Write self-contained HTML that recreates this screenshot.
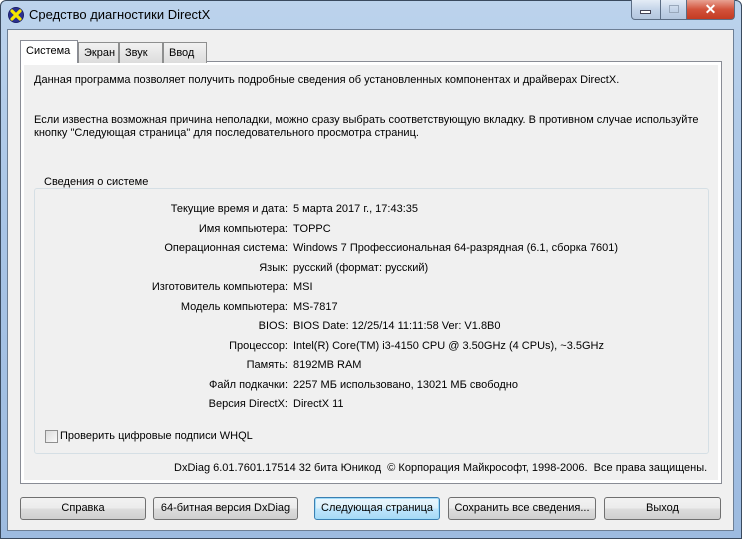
<!DOCTYPE html>
<html><head><meta charset="utf-8"><style>
*{margin:0;padding:0;box-sizing:border-box}
body{width:742px;height:539px;overflow:hidden;font-family:"Liberation Sans",sans-serif;font-size:11px;color:#000;background:#fff}
.frame{position:absolute;left:0;top:0;width:742px;height:539px;background:linear-gradient(#bcd3ec,#a9c5e6 40%,#9dbbe0);border:1px solid #3a4a5e;border-radius:6px 6px 0 0}
.client{position:absolute;left:7px;top:29px;width:727px;height:502px;background:#f0f0f0;border:1px solid #6d7f95}
.t{position:absolute;white-space:nowrap}
.title{left:29px;top:7px;font-size:13px;color:#000}
.cap{position:absolute;top:0;height:20px;border:1px solid #5b6d84;border-top:none}
.tab{position:absolute;top:41px;height:21px;border:1px solid #8e8f8f;border-bottom:none;background:linear-gradient(#f2f2f2,#dcdcdc);padding:4px 0 0 5px;font-size:11px}
.panel{position:absolute;left:12px;top:31px;width:702px;height:423px;border:1px solid #898c95;background:#fff}
.panel-in{position:absolute;left:3px;top:3px;right:3px;bottom:3px;background:#f0f0f0}
.grp{position:absolute;left:26px;top:158px;width:675px;height:266px;border:1px solid #d5dfe5;border-radius:3px}
.btn{position:absolute;top:467px;height:23px;border:1px solid #707070;border-radius:3px;background:linear-gradient(#f2f2f2 0,#ebebeb 50%,#dddddd 51%,#cfcfcf 100%);text-align:center;line-height:21px;font-size:11px}
</style></head><body>
<div class="frame"></div>
<svg style="position:absolute;left:7px;top:6px" width="18" height="18" viewBox="0 0 18 18"><circle cx="9" cy="9" r="8" fill="#1b1f6b"/><circle cx="9" cy="9" r="7" fill="#2b318f"/><path d="M5 5L13 13M13 5L5 13" stroke="#f5e600" stroke-width="3.2" stroke-linecap="round"/></svg>
<div class="t title">Средство диагностики DirectX</div>
<div class="cap" style="left:631px;width:30px;background:linear-gradient(#e4ecf6,#c4d4e8 50%,#b3c6de);border-radius:0 0 0 4px"><div style="position:absolute;left:8px;top:10px;width:11px;height:4px;background:#fff;border:1px solid #445"></div></div>
<div class="cap" style="left:660px;width:27px;background:linear-gradient(#e4ecf6,#c4d4e8 50%,#b3c6de)"><div style="position:absolute;left:8px;top:5px;width:10px;height:8px;border:1px solid #99a8bb"></div></div>
<div class="cap" style="left:686px;width:49px;background:linear-gradient(#e8a293,#d2523b 50%,#c33b22);border-radius:0 0 4px 0;color:#fff;text-align:center;font-weight:bold;font-size:14px;line-height:18px">✕</div>
<div class="client">
<div class="panel"><div class="panel-in"></div></div>
<div class="tab" style="left:12px;top:10px;width:58px;height:23px;background:#fff;z-index:2;border-color:#898c95">Система</div>
<div class="tab" style="left:70px;top:12px;width:41px">Экран</div>
<div class="tab" style="left:111px;top:12px;width:44px">Звук</div>
<div class="tab" style="left:155px;top:12px;width:44px">Ввод</div>
<div class="t" style="left:26px;top:44px">Данная программа позволяет получить подробные сведения об установленных компонентах и драйверах DirectX.</div>
<div class="t" style="left:26px;top:84px">Если известна возможная причина неполадки, можно сразу выбрать соответствующую вкладку. В противном случае используйте</div>
<div class="t" style="left:26px;top:97px">кнопку "Следующая страница" для последовательного просмотра страниц.</div>
<div class="grp"></div>
<div class="t" style="left:32px;top:146px;background:#f0f0f0;padding:0 4px">Сведения о системе</div>
<div style="position:absolute;left:80px;top:170px;width:200px;line-height:19.5px;text-align:right">Текущие время и дата:<br>Имя компьютера:<br>Операционная система:<br>Язык:<br>Изготовитель компьютера:<br>Модель компьютера:<br>BIOS:<br>Процессор:<br>Память:<br>Файл подкачки:<br>Версия DirectX:</div>
<div class="t" style="left:285px;top:170px;line-height:19.5px">5 марта 2017 г., 17:43:35<br>TOPPC<br>Windows 7 Профессиональная 64-разрядная (6.1, сборка 7601)<br>русский (формат: русский)<br>MSI<br>MS-7817<br>BIOS Date: 12/25/14 11:11:58 Ver: V1.8B0<br>Intel(R) Core(TM) i3-4150 CPU @ 3.50GHz (4 CPUs), ~3.5GHz<br>8192MB RAM<br>2257 МБ использовано, 13021 МБ свободно<br>DirectX 11</div>
<div style="position:absolute;left:37px;top:400px;width:13px;height:13px;border:1px solid #8f8f8f;background:linear-gradient(135deg,#dcdcdc,#fafafa)"></div>
<div class="t" style="left:52px;top:400px">Проверить цифровые подписи WHQL</div>
<div class="t" style="left:166px;top:432px">DxDiag 6.01.7601.17514 32 бита Юникод &nbsp;© Корпорация Майкрософт, 1998-2006. &nbsp;Все права защищены.</div>
<div class="btn" style="left:12px;width:126px">Справка</div>
<div class="btn" style="left:145px;width:145px">64-битная версия DxDiag</div>
<div class="btn" style="left:306px;width:126px;border-color:#3c7fb1;background:linear-gradient(#eaf6fd 0,#d9f0fc 50%,#bee6fd 51%,#a7d9f5 100%);box-shadow:inset 0 0 0 1px #9fdcfa">Следующая страница</div>
<div class="btn" style="left:440px;width:148px">Сохранить все сведения...</div>
<div class="btn" style="left:596px;width:117px">Выход</div>
</div>
</body></html>
